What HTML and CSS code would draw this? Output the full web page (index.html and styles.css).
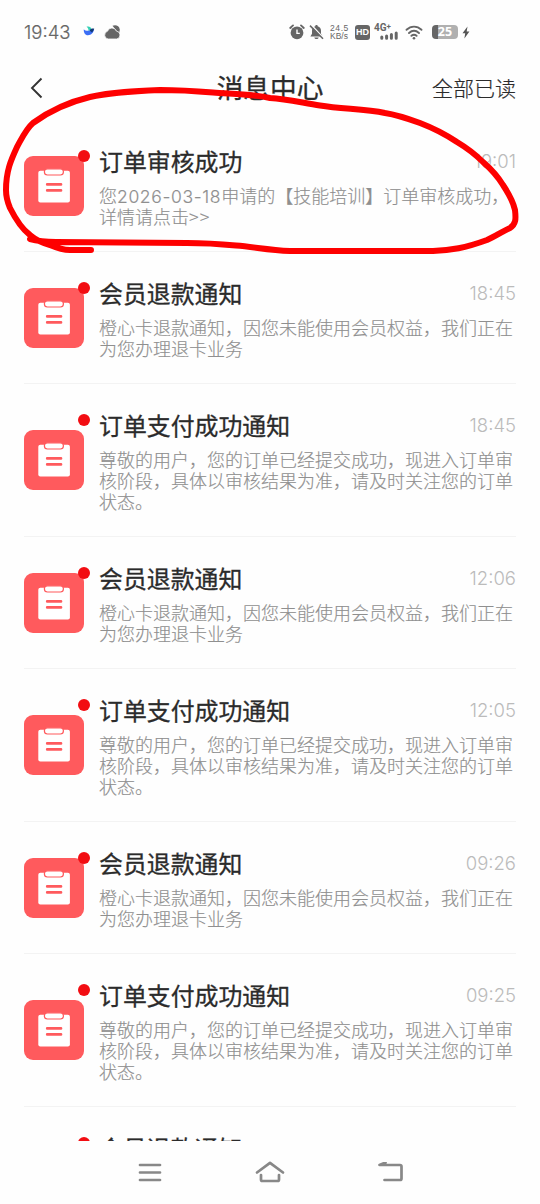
FILE: index.html
```html
<!DOCTYPE html>
<html lang="zh-CN">
<head>
<meta charset="UTF-8" />
<meta name="viewport" content="width=device-width, initial-scale=1.0" />
<title>消息中心</title>
<link rel="stylesheet" href="styles.css">
</head>
<body>
  <!-- Shared clipboard icon -->
  <svg class="defs" width="0" height="0">
    <symbol id="clipboard" viewBox="0 0 60 60">
      <rect width="60" height="60" rx="9" fill="#ff5a5d"/>
      <rect x="14.3" y="14.8" width="31.6" height="31.7" rx="2" fill="#fff"/>
      <rect x="20.4" y="12.8" width="19" height="6.2" rx="3" fill="#fff" stroke="#ff5a5d" stroke-width="1.2"/>
      <path d="M23.2 28.4h13.800M23.200 34.400h13.800" stroke="#ff5a5d" stroke-width="2.7" stroke-linecap="round"/>
    </symbol>
  </svg>

  <div class="phone">
    <div class="status-bar">
      <div class="status-left">
        <span class="clock">19:43</span>
        <svg class="bird" width="12" height="10" viewBox="0 0 12 10">
          <path d="M3.5.8C6 .2 8 .8 8.5 3.5L5.5 5C5.5 3 5 1.6 3.5.8z" fill="#35d0b5"/>
          <path d="M.8 3.2C2.5 5.2 6 5.6 11 3 10.5 7 8.2 9.2 5 9.2 2 9.2.5 6.500.8 3.2z" fill="#3b6ef5"/>
          <path d="M6.5 4.4C8 2.4 9.5 2.2 11.3 2.8 10.5 4 10.3 5.5 9 6.5z" fill="#123a78"/>
        </svg>
        <svg class="cloud" width="17" height="16" viewBox="0 0 17 16">
          <path d="M8.500 1.800C11.200.2 15.400 1.600 15.700 5.200c.1 1.800-.4 3.200-1.300 4z" fill="#666"/>
          <path d="M4.200 15a4 4 0 0 1-.7-7.800 4.700 4.700 0 0 1 8.900-.1 4 4 0 0 1 .4 7.900z" fill="#666" stroke="#fefefe" stroke-width=".8"/>
        </svg>
      </div>
      <div class="status-right">
        <svg width="16" height="16" viewBox="0 0 16 16">
          <circle cx="8" cy="8.8" r="6.4" fill="#666"/>
          <path d="M1.2 4L4 1.4M14.8 4L12 1.4" stroke="#666" stroke-width="1.8" stroke-linecap="round"/>
          <path d="M8 5.6v3.8h2.8" fill="none" stroke="#fff" stroke-width="1.4"/>
        </svg>
        <svg width="15" height="16" viewBox="0 0 15 16">
          <path d="M7.5 1c.8 0 1.2.4 1.2 1.2C11 2.8 12 4.6 12 6.8v3l1.6 2.6H1.4L3 9.8v-3c0-2.2 1-4 3.3-4.6C6.3 1.4 6.7 1 7.5 1z" fill="#666"/>
          <path d="M5.3 13.4h4.4c-.3 1-1.1 1.6-2.2 1.600s-1.9-.6-2.200-1.600z" fill="#666"/>
          <path d="M2.6 1.200l12 13" stroke="#fff" stroke-width="1.600"/>
          <path d="M1 1.6l13 13.2" stroke="#666" stroke-width="1.500"/>
        </svg>
        <span class="speed"><b>24.5</b><i>KB/s</i></span>
        <span class="hd">HD</span>
        <span class="signal">
          <span class="net">4G<sup>+</sup></span>
          <svg width="18" height="9" viewBox="0 0 18 9">
            <path d="M1.800 6v1.200M6.600 5v2.200M11.400 3.500v3.700M16.200 2v5.200" stroke="#666" stroke-width="3" stroke-linecap="round"/>
          </svg>
        </span>
        <svg class="wifi" width="18" height="15" viewBox="0 0 18 15">
          <path d="M1.500 4.800C6 .6 12 .6 16.500 4.800M4 8c3.200-2.800 6.800-2.800 10 0M6.400 10.800c1.700-1.400 3.500-1.400 5.200 0" fill="none" stroke="#666" stroke-width="1.9" stroke-linecap="round"/>
          <circle cx="9" cy="13.200" r="1.300" fill="#666"/>
        </svg>
        <span class="battery">25</span>
        <svg class="bolt" width="8" height="13" viewBox="0 0 8 13">
          <path d="M5.500.5L.5 7.300h2.700L2.400 12.500l5-6.900H4.700z" fill="#555"/>
        </svg>
      </div>
    </div>

    <header class="nav">
      <svg class="back" width="14" height="22" viewBox="0 0 14 22">
        <path d="M11.500 1.500L2 11l9.500 9.500" fill="none" stroke="#333" stroke-width="1.9"/>
      </svg>
      <h1>消息中心</h1>
      <a class="read-all">全部已读</a>
    </header>

    <main class="list">
      <div class="item">
        <svg class="icon"><use href="#clipboard"/></svg><i class="dot"></i>
        <div class="content">
          <div class="head"><h2>订单审核成功</h2><time>19:01</time></div>
          <p>您<span class="num">2026-03-18</span>申请的【技能培训】订单审核成功，<br>详情请点击<span class="more">&gt;&gt;</span></p>
        </div>
      </div>
      <div class="item">
        <svg class="icon"><use href="#clipboard"/></svg><i class="dot"></i>
        <div class="content">
          <div class="head"><h2>会员退款通知</h2><time>18:45</time></div>
          <p>橙心卡退款通知，因您未能使用会员权益，我们正在为您办理退卡业务</p>
        </div>
      </div>
      <div class="item">
        <svg class="icon"><use href="#clipboard"/></svg><i class="dot"></i>
        <div class="content">
          <div class="head"><h2>订单支付成功通知</h2><time>18:45</time></div>
          <p>尊敬的用户，您的订单已经提交成功，现进入订单审核阶段，具体以审核结果为准，请及时关注您的订单状态。</p>
        </div>
      </div>
      <div class="item">
        <svg class="icon"><use href="#clipboard"/></svg><i class="dot"></i>
        <div class="content">
          <div class="head"><h2>会员退款通知</h2><time>12:06</time></div>
          <p>橙心卡退款通知，因您未能使用会员权益，我们正在为您办理退卡业务</p>
        </div>
      </div>
      <div class="item">
        <svg class="icon"><use href="#clipboard"/></svg><i class="dot"></i>
        <div class="content">
          <div class="head"><h2>订单支付成功通知</h2><time>12:05</time></div>
          <p>尊敬的用户，您的订单已经提交成功，现进入订单审核阶段，具体以审核结果为准，请及时关注您的订单状态。</p>
        </div>
      </div>
      <div class="item">
        <svg class="icon"><use href="#clipboard"/></svg><i class="dot"></i>
        <div class="content">
          <div class="head"><h2>会员退款通知</h2><time>09:26</time></div>
          <p>橙心卡退款通知，因您未能使用会员权益，我们正在为您办理退卡业务</p>
        </div>
      </div>
      <div class="item">
        <svg class="icon"><use href="#clipboard"/></svg><i class="dot"></i>
        <div class="content">
          <div class="head"><h2>订单支付成功通知</h2><time>09:25</time></div>
          <p>尊敬的用户，您的订单已经提交成功，现进入订单审核阶段，具体以审核结果为准，请及时关注您的订单状态。</p>
        </div>
      </div>
      <div class="item last">
        <i class="dot"></i>
        <div class="content">
          <div class="head"><h2>会员退款通知</h2></div>
        </div>
      </div>
    </main>

    <footer class="sys-nav">
      <svg width="24" height="22" viewBox="0 0 24 22">
        <path d="M2 3h20M2 10.500h20M2 18h20"/>
      </svg>
      <svg width="30" height="24" viewBox="0 0 30 24">
        <path d="M2 11.500L15 1.800L28 11.500M6 14v4.500q0 1.500 1.500 1.500h15q1.500 0 1.500-1.500v-4.500"/>
      </svg>
      <svg width="26" height="22" viewBox="0 0 26 22">
        <path d="M7.500.5L1.500 3h20.500q1.500 0 1.500 1.500v12q0 1.500-1.500 1.500H6.500"/>
      </svg>
    </footer>

    <!-- Hand drawn circle over the first message -->
    <svg class="scribble" width="540" height="270" viewBox="0 0 540 270">
      <path d="M30 239C37 241 44 242 56 242L187 243C204 243 220 244 236 245.500C255 247 268 250 290 251L433 251C451 250.500 465 248 487 240C496 236 503 231 510 228C516 224 516 219 515 210C513 201 509 194 503 185C497 175 491 169 483 162C475 154 467 148 457 142C445 134 433 128 420 123C409 119 398 115 385 113C364 109 342 109 320 105.500C303 103 287 99 270 98C251 94 232 94 213 92.500C195 91 178 90 160 90C136 91 112 92 90 97C69 102 48 112 33 123C26 129 22 138 17 147C11 160 6 171 6 190C6 197 7 201 10 208C16 220 22 229 30 235C36 240 42 243 50 245C57 248 64 250 70 250L91 250"/>
    </svg>
  </div>
</body>
</html>
```

FILE: styles.css
```css
* { box-sizing: border-box; }

body {
  margin: 0;
  background: #fefefe;
  font-family: "Noto Sans CJK SC", sans-serif;
  color: #2b2b2b;
}

h1, h2, p { margin: 0; }

.defs { position: absolute; }

.phone {
  position: relative;
  display: flex;
  flex-direction: column;
  width: 540px;
  height: 1204px;
  overflow: hidden;
}

/* Status bar */
.status-bar {
  display: flex;
  justify-content: space-between;
  height: 64px;
  padding: 0 70px 0 24px;
  color: #666;
}
.status-left, .status-right {
  display: flex;
  align-items: center;
}
.clock {
  width: 47px;
  font: 300 18.5px Inter, sans-serif;
  white-space: nowrap;
  -webkit-text-stroke: 0.2px #666;
}
.bird { margin: 0 9px 2px 12px; }
.status-right { gap: 4px; }
.speed {
  width: 20px;
  margin-left: 2px;
  font: 8.5px/8px "Liberation Sans", sans-serif;
}
.speed b, .speed i {
  display: block;
  font-weight: 400;
  font-style: normal;
}
.speed b { letter-spacing: 0.6px; }
.hd {
  width: 15px;
  height: 15px;
  margin-left: 1px;
  border-radius: 3px;
  background: #666;
  color: #fff;
  font: bold 9px/15px "Liberation Sans", sans-serif;
  text-align: center;
}
.signal {
  display: flex;
  flex-direction: column;
  align-items: flex-end;
  width: 24px;
  height: 16px;
}
.net {
  align-self: flex-start;
  height: 7px;
  font: bold 10px/8px Roboto, sans-serif;
}
.net sup {
  font-size: 8px;
  line-height: 0;
  vertical-align: 2px;
}
.wifi { margin: 0 5px 0 3px; }
.battery {
  width: 26px;
  height: 14px;
  border-radius: 4px;
  background: linear-gradient(90deg, #666 22%, #b0b0b0 22%);
  color: #fff;
  font: bold 12.5px/14px "Open Sans", sans-serif;
  text-align: center;
}

/* Page header */
.nav {
  display: grid;
  grid-template-columns: 1fr auto 1fr;
  align-items: center;
  height: 48px;
  padding: 0 24px;
}
.back { margin-left: 6px; }
.nav h1 {
  font-size: 26.7px;
  font-weight: 400;
  line-height: 46px;
  height: 48px;
  -webkit-text-stroke: 0.3px #2b2b2b;
}
.read-all {
  justify-self: end;
  height: 48px;
  font-size: 21px;
  font-weight: 300;
  line-height: 46px;
  -webkit-text-stroke: 0.2px #2b2b2b;
}

/* Messages */
.list {
  height: 1029px;
  padding: 8px 24px 0;
  overflow: hidden;
}
.item {
  position: relative;
  display: flex;
  align-items: center;
  gap: 15px;
  padding: 24px 0;
  border-bottom: 1px solid #f3f3f3;
}
.item.last { padding-left: 75px; }
.icon {
  flex: none;
  width: 60px;
  height: 60px;
}
.dot {
  position: absolute;
  top: 30px;
  left: 54px;
  width: 12px;
  height: 12px;
  border-radius: 50%;
  background: #f20d12;
}
.content { flex: 1; min-width: 0; }
.head {
  display: flex;
  justify-content: space-between;
  height: 34px;
  margin-bottom: 7px;
  line-height: 33px;
}
.head h2 {
  font-size: 23.9px;
  font-weight: 400;
  -webkit-text-stroke: 0.3px #2b2b2b;
}
.head time {
  font: 300 18.5px/35px Inter, sans-serif;
  color: #bbb;
}
.content p {
  font-size: 18px;
  font-weight: 300;
  line-height: 21px;
  color: #8f8f8f;
  -webkit-text-stroke: 0.15px #8f8f8f;
}
.num {
  font: 300 17.5px/0 Inter, sans-serif;
  letter-spacing: 0.65px;
}
.more { letter-spacing: 1.2px; }

/* System navigation */
.sys-nav {
  display: flex;
  justify-content: center;
  align-items: center;
  gap: 93px;
  height: 63px;
  padding-left: 2px;
}
.sys-nav path {
  fill: none;
  stroke: #888;
  stroke-width: 2.7;
  stroke-linecap: round;
  stroke-linejoin: round;
}

.scribble {
  position: absolute;
  top: 0;
  left: 0;
}
.scribble path {
  fill: none;
  stroke: #fe0000;
  stroke-width: 6;
  stroke-linecap: round;
  stroke-linejoin: round;
}
```
